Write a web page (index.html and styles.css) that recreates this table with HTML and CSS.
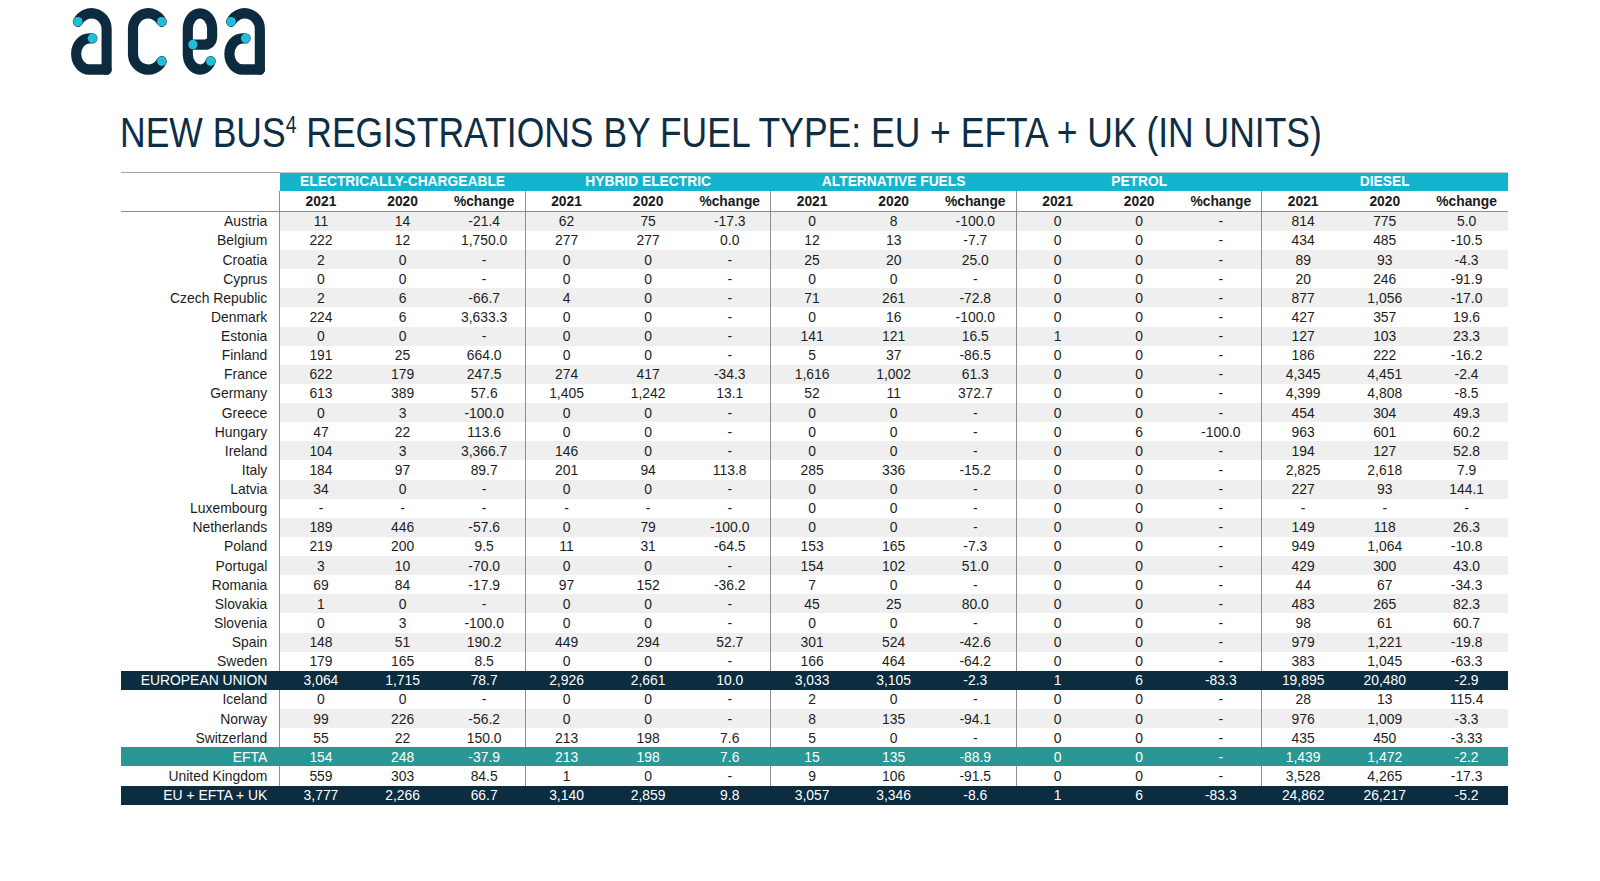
FILE: index.html
```html
<!DOCTYPE html>
<html lang="en">
<head>
<meta charset="utf-8">
<title>New bus registrations by fuel type</title>
<link rel="stylesheet" href="styles.css">
</head>
<body>
<header class="brand">
  <svg class="logo" width="205" height="77" viewBox="66 4 202 74" preserveAspectRatio="none" aria-label="acea">
    <g class="ink">
      <path d="M78.7,21 A15,15 0 0 1 107,28 L107,67"/>
      <path d="M93,37 L90,37 A13,15 0 0 0 90,67 L107,67"/>
      <path d="M161.3,21 A15,15 0 0 0 133,28 L133,52 A15,15 0 0 0 161.3,59"/>
      <path d="M192,43 L203,43 Q211,43 211,35 L211,28 A12,15 0 0 0 187,28 L187,52 A12,15 0 0 0 209.6,59"/>
      <path d="M229.7,21 A15,15 0 0 1 258,28 L258,67"/>
      <path d="M244,37 L241,37 A13,15 0 0 0 241,67 L258,67"/>
    </g>
    <g class="dots">
      <circle cx="78.7" cy="21" r="4.6"/>
      <circle cx="93" cy="37" r="4.6"/>
      <circle cx="161.3" cy="21" r="4.6"/>
      <circle cx="161.3" cy="59" r="4.6"/>
      <circle cx="192" cy="43" r="4.6"/>
      <circle cx="209.6" cy="59" r="4.6"/>
      <circle cx="229.7" cy="21" r="4.6"/>
      <circle cx="244" cy="37" r="4.6"/>
    </g>
  </svg>
</header>

<h1 class="title">NEW BUS<sup>4</sup> REGISTRATIONS BY FUEL TYPE: EU + EFTA + UK (IN UNITS)</h1>

<table class="reg">
  <colgroup>
    <col class="c-lab">
    <col span="15" class="c-num">
  </colgroup>
  <thead>
    <tr class="grp-row">
      <th class="corner"></th>
      <th colspan="3">ELECTRICALLY-CHARGEABLE</th>
      <th colspan="3">HYBRID ELECTRIC</th>
      <th colspan="3">ALTERNATIVE FUELS</th>
      <th colspan="3">PETROL</th>
      <th colspan="3">DIESEL</th>
    </tr>
    <tr class="yr-row">
      <th class="blank"></th>
      <th>2021</th><th>2020</th><th>%change</th>
      <th>2021</th><th>2020</th><th>%change</th>
      <th>2021</th><th>2020</th><th>%change</th>
      <th>2021</th><th>2020</th><th>%change</th>
      <th>2021</th><th>2020</th><th>%change</th>
    </tr>
  </thead>
  <tbody>
    <tr class="alt"><th>Austria</th><td>11</td><td>14</td><td>-21.4</td><td>62</td><td>75</td><td>-17.3</td><td>0</td><td>8</td><td>-100.0</td><td>0</td><td>0</td><td>-</td><td>814</td><td>775</td><td>5.0</td></tr>
    <tr><th>Belgium</th><td>222</td><td>12</td><td>1,750.0</td><td>277</td><td>277</td><td>0.0</td><td>12</td><td>13</td><td>-7.7</td><td>0</td><td>0</td><td>-</td><td>434</td><td>485</td><td>-10.5</td></tr>
    <tr class="alt"><th>Croatia</th><td>2</td><td>0</td><td>-</td><td>0</td><td>0</td><td>-</td><td>25</td><td>20</td><td>25.0</td><td>0</td><td>0</td><td>-</td><td>89</td><td>93</td><td>-4.3</td></tr>
    <tr><th>Cyprus</th><td>0</td><td>0</td><td>-</td><td>0</td><td>0</td><td>-</td><td>0</td><td>0</td><td>-</td><td>0</td><td>0</td><td>-</td><td>20</td><td>246</td><td>-91.9</td></tr>
    <tr class="alt"><th>Czech Republic</th><td>2</td><td>6</td><td>-66.7</td><td>4</td><td>0</td><td>-</td><td>71</td><td>261</td><td>-72.8</td><td>0</td><td>0</td><td>-</td><td>877</td><td>1,056</td><td>-17.0</td></tr>
    <tr><th>Denmark</th><td>224</td><td>6</td><td>3,633.3</td><td>0</td><td>0</td><td>-</td><td>0</td><td>16</td><td>-100.0</td><td>0</td><td>0</td><td>-</td><td>427</td><td>357</td><td>19.6</td></tr>
    <tr class="alt"><th>Estonia</th><td>0</td><td>0</td><td>-</td><td>0</td><td>0</td><td>-</td><td>141</td><td>121</td><td>16.5</td><td>1</td><td>0</td><td>-</td><td>127</td><td>103</td><td>23.3</td></tr>
    <tr><th>Finland</th><td>191</td><td>25</td><td>664.0</td><td>0</td><td>0</td><td>-</td><td>5</td><td>37</td><td>-86.5</td><td>0</td><td>0</td><td>-</td><td>186</td><td>222</td><td>-16.2</td></tr>
    <tr class="alt"><th>France</th><td>622</td><td>179</td><td>247.5</td><td>274</td><td>417</td><td>-34.3</td><td>1,616</td><td>1,002</td><td>61.3</td><td>0</td><td>0</td><td>-</td><td>4,345</td><td>4,451</td><td>-2.4</td></tr>
    <tr><th>Germany</th><td>613</td><td>389</td><td>57.6</td><td>1,405</td><td>1,242</td><td>13.1</td><td>52</td><td>11</td><td>372.7</td><td>0</td><td>0</td><td>-</td><td>4,399</td><td>4,808</td><td>-8.5</td></tr>
    <tr class="alt"><th>Greece</th><td>0</td><td>3</td><td>-100.0</td><td>0</td><td>0</td><td>-</td><td>0</td><td>0</td><td>-</td><td>0</td><td>0</td><td>-</td><td>454</td><td>304</td><td>49.3</td></tr>
    <tr><th>Hungary</th><td>47</td><td>22</td><td>113.6</td><td>0</td><td>0</td><td>-</td><td>0</td><td>0</td><td>-</td><td>0</td><td>6</td><td>-100.0</td><td>963</td><td>601</td><td>60.2</td></tr>
    <tr class="alt"><th>Ireland</th><td>104</td><td>3</td><td>3,366.7</td><td>146</td><td>0</td><td>-</td><td>0</td><td>0</td><td>-</td><td>0</td><td>0</td><td>-</td><td>194</td><td>127</td><td>52.8</td></tr>
    <tr><th>Italy</th><td>184</td><td>97</td><td>89.7</td><td>201</td><td>94</td><td>113.8</td><td>285</td><td>336</td><td>-15.2</td><td>0</td><td>0</td><td>-</td><td>2,825</td><td>2,618</td><td>7.9</td></tr>
    <tr class="alt"><th>Latvia</th><td>34</td><td>0</td><td>-</td><td>0</td><td>0</td><td>-</td><td>0</td><td>0</td><td>-</td><td>0</td><td>0</td><td>-</td><td>227</td><td>93</td><td>144.1</td></tr>
    <tr><th>Luxembourg</th><td>-</td><td>-</td><td>-</td><td>-</td><td>-</td><td>-</td><td>0</td><td>0</td><td>-</td><td>0</td><td>0</td><td>-</td><td>-</td><td>-</td><td>-</td></tr>
    <tr class="alt"><th>Netherlands</th><td>189</td><td>446</td><td>-57.6</td><td>0</td><td>79</td><td>-100.0</td><td>0</td><td>0</td><td>-</td><td>0</td><td>0</td><td>-</td><td>149</td><td>118</td><td>26.3</td></tr>
    <tr><th>Poland</th><td>219</td><td>200</td><td>9.5</td><td>11</td><td>31</td><td>-64.5</td><td>153</td><td>165</td><td>-7.3</td><td>0</td><td>0</td><td>-</td><td>949</td><td>1,064</td><td>-10.8</td></tr>
    <tr class="alt"><th>Portugal</th><td>3</td><td>10</td><td>-70.0</td><td>0</td><td>0</td><td>-</td><td>154</td><td>102</td><td>51.0</td><td>0</td><td>0</td><td>-</td><td>429</td><td>300</td><td>43.0</td></tr>
    <tr><th>Romania</th><td>69</td><td>84</td><td>-17.9</td><td>97</td><td>152</td><td>-36.2</td><td>7</td><td>0</td><td>-</td><td>0</td><td>0</td><td>-</td><td>44</td><td>67</td><td>-34.3</td></tr>
    <tr class="alt"><th>Slovakia</th><td>1</td><td>0</td><td>-</td><td>0</td><td>0</td><td>-</td><td>45</td><td>25</td><td>80.0</td><td>0</td><td>0</td><td>-</td><td>483</td><td>265</td><td>82.3</td></tr>
    <tr><th>Slovenia</th><td>0</td><td>3</td><td>-100.0</td><td>0</td><td>0</td><td>-</td><td>0</td><td>0</td><td>-</td><td>0</td><td>0</td><td>-</td><td>98</td><td>61</td><td>60.7</td></tr>
    <tr class="alt"><th>Spain</th><td>148</td><td>51</td><td>190.2</td><td>449</td><td>294</td><td>52.7</td><td>301</td><td>524</td><td>-42.6</td><td>0</td><td>0</td><td>-</td><td>979</td><td>1,221</td><td>-19.8</td></tr>
    <tr><th>Sweden</th><td>179</td><td>165</td><td>8.5</td><td>0</td><td>0</td><td>-</td><td>166</td><td>464</td><td>-64.2</td><td>0</td><td>0</td><td>-</td><td>383</td><td>1,045</td><td>-63.3</td></tr>
    <tr class="tot"><th>EUROPEAN UNION</th><td>3,064</td><td>1,715</td><td>78.7</td><td>2,926</td><td>2,661</td><td>10.0</td><td>3,033</td><td>3,105</td><td>-2.3</td><td>1</td><td>6</td><td>-83.3</td><td>19,895</td><td>20,480</td><td>-2.9</td></tr>
    <tr><th>Iceland</th><td>0</td><td>0</td><td>-</td><td>0</td><td>0</td><td>-</td><td>2</td><td>0</td><td>-</td><td>0</td><td>0</td><td>-</td><td>28</td><td>13</td><td>115.4</td></tr>
    <tr class="alt"><th>Norway</th><td>99</td><td>226</td><td>-56.2</td><td>0</td><td>0</td><td>-</td><td>8</td><td>135</td><td>-94.1</td><td>0</td><td>0</td><td>-</td><td>976</td><td>1,009</td><td>-3.3</td></tr>
    <tr><th>Switzerland</th><td>55</td><td>22</td><td>150.0</td><td>213</td><td>198</td><td>7.6</td><td>5</td><td>0</td><td>-</td><td>0</td><td>0</td><td>-</td><td>435</td><td>450</td><td>-3.33</td></tr>
    <tr class="efta"><th>EFTA</th><td>154</td><td>248</td><td>-37.9</td><td>213</td><td>198</td><td>7.6</td><td>15</td><td>135</td><td>-88.9</td><td>0</td><td>0</td><td>-</td><td>1,439</td><td>1,472</td><td>-2.2</td></tr>
    <tr><th>United Kingdom</th><td>559</td><td>303</td><td>84.5</td><td>1</td><td>0</td><td>-</td><td>9</td><td>106</td><td>-91.5</td><td>0</td><td>0</td><td>-</td><td>3,528</td><td>4,265</td><td>-17.3</td></tr>
    <tr class="tot"><th>EU + EFTA + UK</th><td>3,777</td><td>2,266</td><td>66.7</td><td>3,140</td><td>2,859</td><td>9.8</td><td>3,057</td><td>3,346</td><td>-8.6</td><td>1</td><td>6</td><td>-83.3</td><td>24,862</td><td>26,217</td><td>-5.2</td></tr>
  </tbody>
</table>
</body>
</html>
```

FILE: styles.css
```css
html, body {
  margin: 0;
  padding: 0;
  background: #ffffff;
}

body {
  font-family: "Liberation Sans", Arial, sans-serif;
  color: #1d1d1d;
}

/* ---------- brand ---------- */
.brand {
  padding: 4px 0 0 65px;
  height: 77px;
}

.logo {
  display: block;
}

.logo .ink path {
  fill: none;
  stroke: #0c2b3f;
  stroke-width: 10;
  stroke-linecap: round;
  stroke-linejoin: round;
}

.logo .dots circle {
  fill: #22bdd7;
}

/* ---------- title ---------- */
.title {
  margin: 28px 0 0 120px;
  font-family: "Liberation Sans Narrow", "Liberation Sans", Arial, sans-serif;
  font-weight: normal;
  font-size: 42.5px;
  line-height: 48px;
  color: #0d2e44;
  white-space: nowrap;
  transform: scaleX(0.835);
  transform-origin: left center;
}

.title sup {
  font-size: 23.3px;
  line-height: 0;
  vertical-align: 13.7px;
}

/* ---------- table ---------- */
.reg {
  margin: 15px 0 0 120.5px;
  width: 1387px;
  table-layout: fixed;
  border-collapse: collapse;
  font-size: 13.9px;
  color: #1d1d1d;
}

.reg .c-lab { width: 159.3px; }
.reg .c-num { width: 81.85px; }

.reg th,
.reg td {
  padding: 0;
  text-align: center;
  white-space: nowrap;
  font-weight: normal;
}

/* group header row */
.grp-row th {
  height: 18.4px;
  background: #14b4ce;
  color: #ffffff;
  font-weight: bold;
  font-size: 13.8px;
  line-height: 18px;
  border-top: 1px solid #c9c9c9;
}

.grp-row th.corner {
  background: #ffffff;
  border-top: 1px solid #a5a5a5;
}

/* year header row */
.yr-row th {
  height: 19.4px;
  font-weight: bold;
  font-size: 13.8px;
  line-height: 19px;
  color: #1a1a1a;
  border-bottom: 1.5px solid #8c8c8c;
}

.yr-row th:nth-child(3n+2),
.reg tbody td:nth-child(3n+2) {
  border-left: 1px solid #8e8e8e;
}

/* body rows */
.reg tbody th,
.reg tbody td {
  height: 19.13px;
  line-height: 18px;
}

.reg tbody th {
  text-align: right;
  padding-right: 12px;
}

.reg tbody tr.alt td {
  background: #efefef;
}

.reg tbody tr.tot th,
.reg tbody tr.tot td {
  background: #0c2c40;
  color: #ffffff;
  border-left-color: #0c2c40;
}

.reg tbody tr.efta th,
.reg tbody tr.efta td {
  background: #2a9795;
  color: #ffffff;
  border-left-color: #2a9795;
}
```
